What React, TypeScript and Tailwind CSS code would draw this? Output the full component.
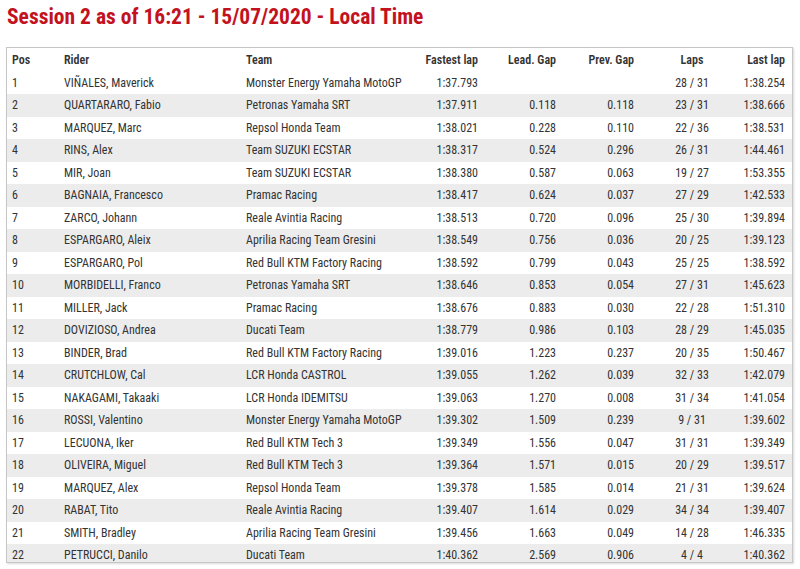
import React from "react";

type Row = [string, string, string, string, string, string, string, string];

const rows: Row[] = [
  ["1", "VIÑALES, Maverick", "Monster Energy Yamaha MotoGP", "1:37.793", "", "", "28 / 31", "1:38.254"],
  ["2", "QUARTARARO, Fabio", "Petronas Yamaha SRT", "1:37.911", "0.118", "0.118", "23 / 31", "1:38.666"],
  ["3", "MARQUEZ, Marc", "Repsol Honda Team", "1:38.021", "0.228", "0.110", "22 / 36", "1:38.531"],
  ["4", "RINS, Alex", "Team SUZUKI ECSTAR", "1:38.317", "0.524", "0.296", "26 / 31", "1:44.461"],
  ["5", "MIR, Joan", "Team SUZUKI ECSTAR", "1:38.380", "0.587", "0.063", "19 / 27", "1:53.355"],
  ["6", "BAGNAIA, Francesco", "Pramac Racing", "1:38.417", "0.624", "0.037", "27 / 29", "1:42.533"],
  ["7", "ZARCO, Johann", "Reale Avintia Racing", "1:38.513", "0.720", "0.096", "25 / 30", "1:39.894"],
  ["8", "ESPARGARO, Aleix", "Aprilia Racing Team Gresini", "1:38.549", "0.756", "0.036", "20 / 25", "1:39.123"],
  ["9", "ESPARGARO, Pol", "Red Bull KTM Factory Racing", "1:38.592", "0.799", "0.043", "25 / 25", "1:38.592"],
  ["10", "MORBIDELLI, Franco", "Petronas Yamaha SRT", "1:38.646", "0.853", "0.054", "27 / 31", "1:45.623"],
  ["11", "MILLER, Jack", "Pramac Racing", "1:38.676", "0.883", "0.030", "22 / 28", "1:51.310"],
  ["12", "DOVIZIOSO, Andrea", "Ducati Team", "1:38.779", "0.986", "0.103", "28 / 29", "1:45.035"],
  ["13", "BINDER, Brad", "Red Bull KTM Factory Racing", "1:39.016", "1.223", "0.237", "20 / 35", "1:50.467"],
  ["14", "CRUTCHLOW, Cal", "LCR Honda CASTROL", "1:39.055", "1.262", "0.039", "32 / 33", "1:42.079"],
  ["15", "NAKAGAMI, Takaaki", "LCR Honda IDEMITSU", "1:39.063", "1.270", "0.008", "31 / 34", "1:41.054"],
  ["16", "ROSSI, Valentino", "Monster Energy Yamaha MotoGP", "1:39.302", "1.509", "0.239", "9 / 31", "1:39.602"],
  ["17", "LECUONA, Iker", "Red Bull KTM Tech 3", "1:39.349", "1.556", "0.047", "31 / 31", "1:39.349"],
  ["18", "OLIVEIRA, Miguel", "Red Bull KTM Tech 3", "1:39.364", "1.571", "0.015", "20 / 29", "1:39.517"],
  ["19", "MARQUEZ, Alex", "Repsol Honda Team", "1:39.378", "1.585", "0.014", "21 / 31", "1:39.624"],
  ["20", "RABAT, Tito", "Reale Avintia Racing", "1:39.407", "1.614", "0.029", "34 / 34", "1:39.407"],
  ["21", "SMITH, Bradley", "Aprilia Racing Team Gresini", "1:39.456", "1.663", "0.049", "14 / 28", "1:46.335"],
  ["22", "PETRUCCI, Danilo", "Ducati Team", "1:40.362", "2.569", "0.906", "4 / 4", "1:40.362"],
];

const grid = "grid grid-cols-[52px_182px_159px_83px_78px_78px_106px_47px] items-center";

function Cells({ r }: { r: Row }) {
  return (
    <>
      <div className="pl-[5px] whitespace-nowrap">{r[0]}</div>
      <div className="pl-[5px] whitespace-nowrap">{r[1]}</div>
      <div className="pl-[5px] whitespace-nowrap">{r[2]}</div>
      <div className="pr-[5px] text-right whitespace-nowrap">{r[3]}</div>
      <div className="pr-[5px] text-right whitespace-nowrap">{r[4]}</div>
      <div className="pr-[5px] text-right whitespace-nowrap">{r[5]}</div>
      <div className="text-center whitespace-nowrap">{r[6]}</div>
      <div className="pr-[7px] flex justify-end whitespace-nowrap">{r[7]}</div>
    </>
  );
}

export default function App() {
  return (
    <div className="w-[800px] h-[569px] bg-white overflow-hidden" style={{ fontFamily: 'Roboto, "Noto Sans", sans-serif' }}>
      <div className="h-[47px] pl-[7px] pt-[4px]">
        <div className="text-[21.5px] leading-[26px] font-bold [font-stretch:80%] text-[#c3121e] whitespace-nowrap">
          Session 2 as of 16:21 - 15/07/2020 - Local Time
        </div>
      </div>
      <div className="ml-[6px] w-[787px] h-[516px] border border-[#c6c6c6] overflow-hidden text-[12px] [font-stretch:80%] text-[#333333] shadow-[1px_1px_2px_rgba(0,0,0,0.15)]">
        <div className={`${grid} h-[23.5px] font-semibold`}>
          <Cells r={["Pos", "Rider", "Team", "Fastest lap", "Lead. Gap", "Prev. Gap", "Laps", "Last lap"]} />
        </div>
        {rows.map((r, i) => (
          <div key={r[0]} className={`${grid} h-[22.5px] ${i % 2 === 1 ? "bg-[#ececec]" : "bg-white"}`}>
            <Cells r={r} />
          </div>
        ))}
      </div>
    </div>
  );
}
